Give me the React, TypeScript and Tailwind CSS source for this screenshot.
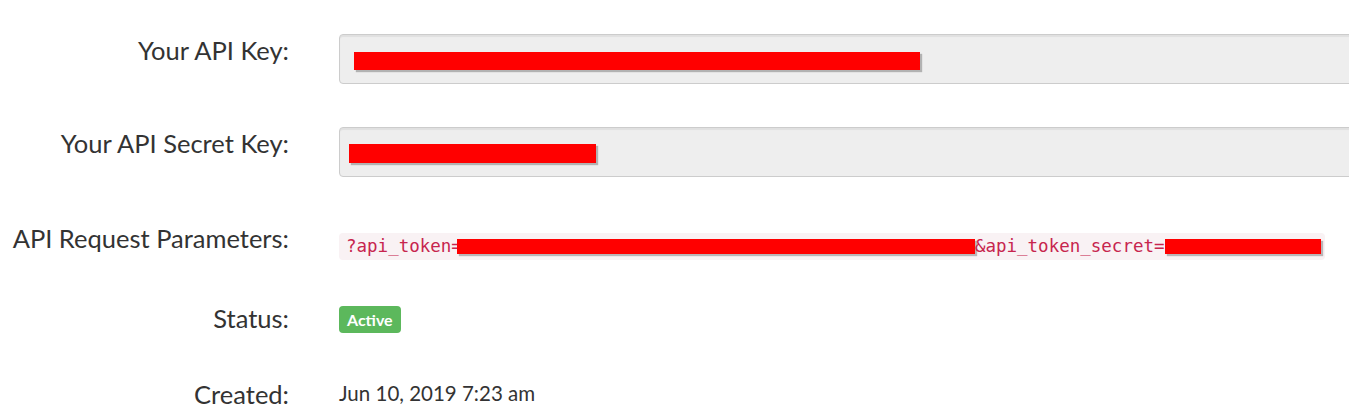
const Redacted = ({ className }: { className: string }) => (
  <span className={`block shrink-0 bg-[#ff0000] shadow-[2px_2px_1px_rgba(0,0,0,0.25)] ${className}`} />
);

const Label = ({ children }: { children: React.ReactNode }) => (
  <div className="w-[289px] shrink-0 pt-[0.5px] text-right text-[25.5px] leading-[1.2] text-[#333]">
    {children}
  </div>
);

const App = () => {
  return (
    <div className="w-[1349px] h-[414px] overflow-hidden bg-white font-['Lato',sans-serif] pt-[34px]">
      <div className="flex">
        <Label>Your API Key:</Label>
        <div className="ml-[50px] w-[1040px] h-[50px] shrink-0 rounded-[4px] border border-[#ccc] bg-[#eee] shadow-[inset_0_2px_1px_rgba(0,0,0,0.06)] pt-[17px] pl-[14px]">
          <Redacted className="w-[566px] h-[18px]" />
        </div>
      </div>

      <div className="flex mt-[43px]">
        <Label>Your API Secret Key:</Label>
        <div className="ml-[50px] w-[1040px] h-[50px] shrink-0 rounded-[4px] border border-[#ccc] bg-[#eee] shadow-[inset_0_2px_1px_rgba(0,0,0,0.06)] pt-[16px] pl-[9px]">
          <Redacted className="w-[247px] h-[19px]" />
        </div>
      </div>

      <div className="flex mt-[45px]">
        <Label>API Request Parameters:</Label>
        <div className="ml-[50px] mt-[11px]">
          <code className="flex items-center h-[27px] rounded-[4px] bg-[#f9f2f4] pl-[7px] pr-[4px] font-['DejaVu_Sans_Mono',monospace] text-[17.5px] text-[#c7254e]">
            <span className="whitespace-nowrap">?api_token=</span>
            <Redacted className="-ml-[5px] w-[518px] h-[15px]" />
            <span className="whitespace-nowrap">&amp;api_token_secret=</span>
            <Redacted className="w-[156px] h-[15px]" />
          </code>
        </div>
      </div>

      <div className="flex mt-[42px]">
        <Label>Status:</Label>
        <div className="ml-[50px] mt-[4px]">
          <span className="flex items-center h-[27px] rounded-[4px] bg-[#5cb85c] px-[8px] text-[16px] font-bold text-white">
            Active
          </span>
        </div>
      </div>

      <div className="flex mt-[45px]">
        <Label>Created:</Label>
        <div className="ml-[50px] mt-[3px] text-[20.5px] leading-[1.2] text-[#333]">Jun 10, 2019 7:23 am</div>
      </div>
    </div>
  );
};

export default App;
